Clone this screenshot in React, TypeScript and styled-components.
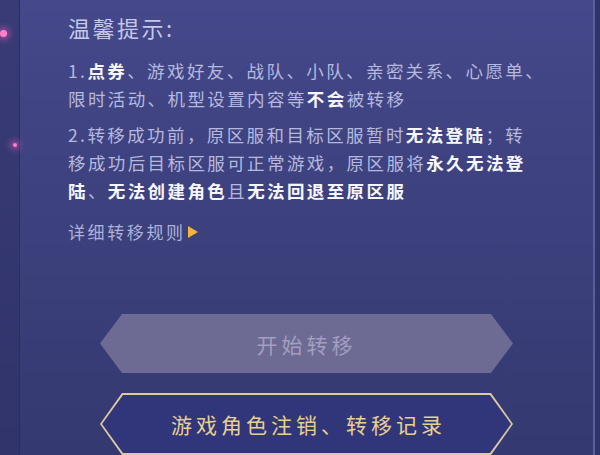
import * as React from 'react';
import styled, {createGlobalStyle} from 'styled-components';

const GlobalStyle = createGlobalStyle`
    html, body {
        margin: 0;
        padding: 0;
        background: #2e3266;
    }
    * {
        box-sizing: border-box;
    }
`;

const Screen = styled.div`
    width: 600px;
    height: 455px;
    overflow: hidden;
    display: flex;
    font-family: "Noto Sans CJK SC", "Noto Sans", sans-serif;
    background: #2e3266;
`;

const LeftStrip = styled.div`
    position: relative;
    width: 20px;
    flex-shrink: 0;
    background: linear-gradient(180deg, #383b76 0%, #30346a 100%);
    border-right: 1px solid #2b2e5e;
`;

const Glow = styled.div<{ $top: number; $left: number; $size: number }>`
    position: absolute;
    top: ${p => p.$top}px;
    left: ${p => p.$left}px;
    width: ${p => p.$size}px;
    height: ${p => p.$size}px;
    border-radius: 50%;
    background: #ff7fc8;
    box-shadow: 0 0 6px 3px rgba(230, 90, 190, 0.55);
`;

const Panel = styled.div`
    flex: 1;
    display: flex;
    flex-direction: column;
    padding: 13px 0 0 48px;
    background: linear-gradient(180deg, #45488a 0%, #3c407c 50%, #353971 100%);
    border-right: 2px solid #5a5e9c;
`;

const RightEdge = styled.div`
    width: 5px;
    flex-shrink: 0;
    background: #2f3368;
`;

const Title = styled.div`
    font-size: 22px;
    line-height: 28px;
    letter-spacing: 2.5px;
    color: #c6c9e8;
`;

const Para = styled.div<{ $gap: number }>`
    margin-top: ${p => p.$gap}px;
    font-size: 17.5px;
    line-height: 28px;
    letter-spacing: 2.4px;
    color: #b6b9de;
    white-space: nowrap;
`;

const Strong = styled.span`
    font-weight: 700;
    color: #f6f6ff;
`;

const RuleLink = styled.div`
    margin-top: 13px;
    display: flex;
    align-items: center;
    gap: 2px;
    font-size: 17px;
    line-height: 28px;
    letter-spacing: 2.6px;
    color: #aeb2da;
`;

const Arrow = styled.span`
    width: 0;
    height: 0;
    border-top: 6px solid transparent;
    border-bottom: 6px solid transparent;
    border-left: 10px solid #f2b53a;
`;

const hexagon = `polygon(22px 0, calc(100% - 22px) 0, 100% 50%, calc(100% - 22px) 100%, 22px 100%, 0 50%)`;

const StartButton = styled.div`
    margin: 68px 0 0 32px;
    width: 413px;
    height: 62px;
    display: flex;
    align-items: center;
    justify-content: center;
    clip-path: ${hexagon};
    background: #6d6a94;
    color: #a29fc1;
    font-size: 21px;
    letter-spacing: 4px;
`;

const RecordFrame = styled.div`
    margin: 20px 0 0 32px;
    width: 413px;
    height: 62px;
    flex-shrink: 0;
    padding: 2px 2px;
    clip-path: ${hexagon};
    background: #dccca0;
`;

const RecordInner = styled.div`
    width: 100%;
    height: 100%;
    display: flex;
    align-items: center;
    justify-content: center;
    clip-path: polygon(21px 0, calc(100% - 21px) 0, 100% 50%, calc(100% - 21px) 100%, 21px 100%, 0 50%);
    background: #31357a;
    color: #e8d08f;
    font-size: 21px;
    letter-spacing: 4px;
    padding-left: 4px;
`;

export default function App() {
    return (
        <>
            <GlobalStyle/>
            <Screen>
                <LeftStrip>
                    <Glow $top={30} $left={0} $size={7}/>
                    <Glow $top={143} $left={13} $size={4}/>
                </LeftStrip>
                <Panel>
                    <Title>温馨提示:</Title>
                    <Para $gap={16}>
                        1.<Strong>点券</Strong>、游戏好友、战队、小队、亲密关系、心愿单、<br/>
                        限时活动、机型设置内容等<Strong>不会</Strong>被转移
                    </Para>
                    <Para $gap={8}>
                        2.转移成功前，原区服和目标区服暂时<Strong>无法登陆</Strong>；转<br/>
                        移成功后目标区服可正常游戏，原区服将<Strong>永久无法登</Strong><br/>
                        <Strong>陆</Strong>、<Strong>无法创建角色</Strong>且<Strong>无法回退至原区服</Strong>
                    </Para>
                    <RuleLink>
                        详细转移规则<Arrow/>
                    </RuleLink>
                    <StartButton>开始转移</StartButton>
                    <RecordFrame>
                        <RecordInner>游戏角色注销、转移记录</RecordInner>
                    </RecordFrame>
                </Panel>
                <RightEdge/>
            </Screen>
        </>
    );
}
